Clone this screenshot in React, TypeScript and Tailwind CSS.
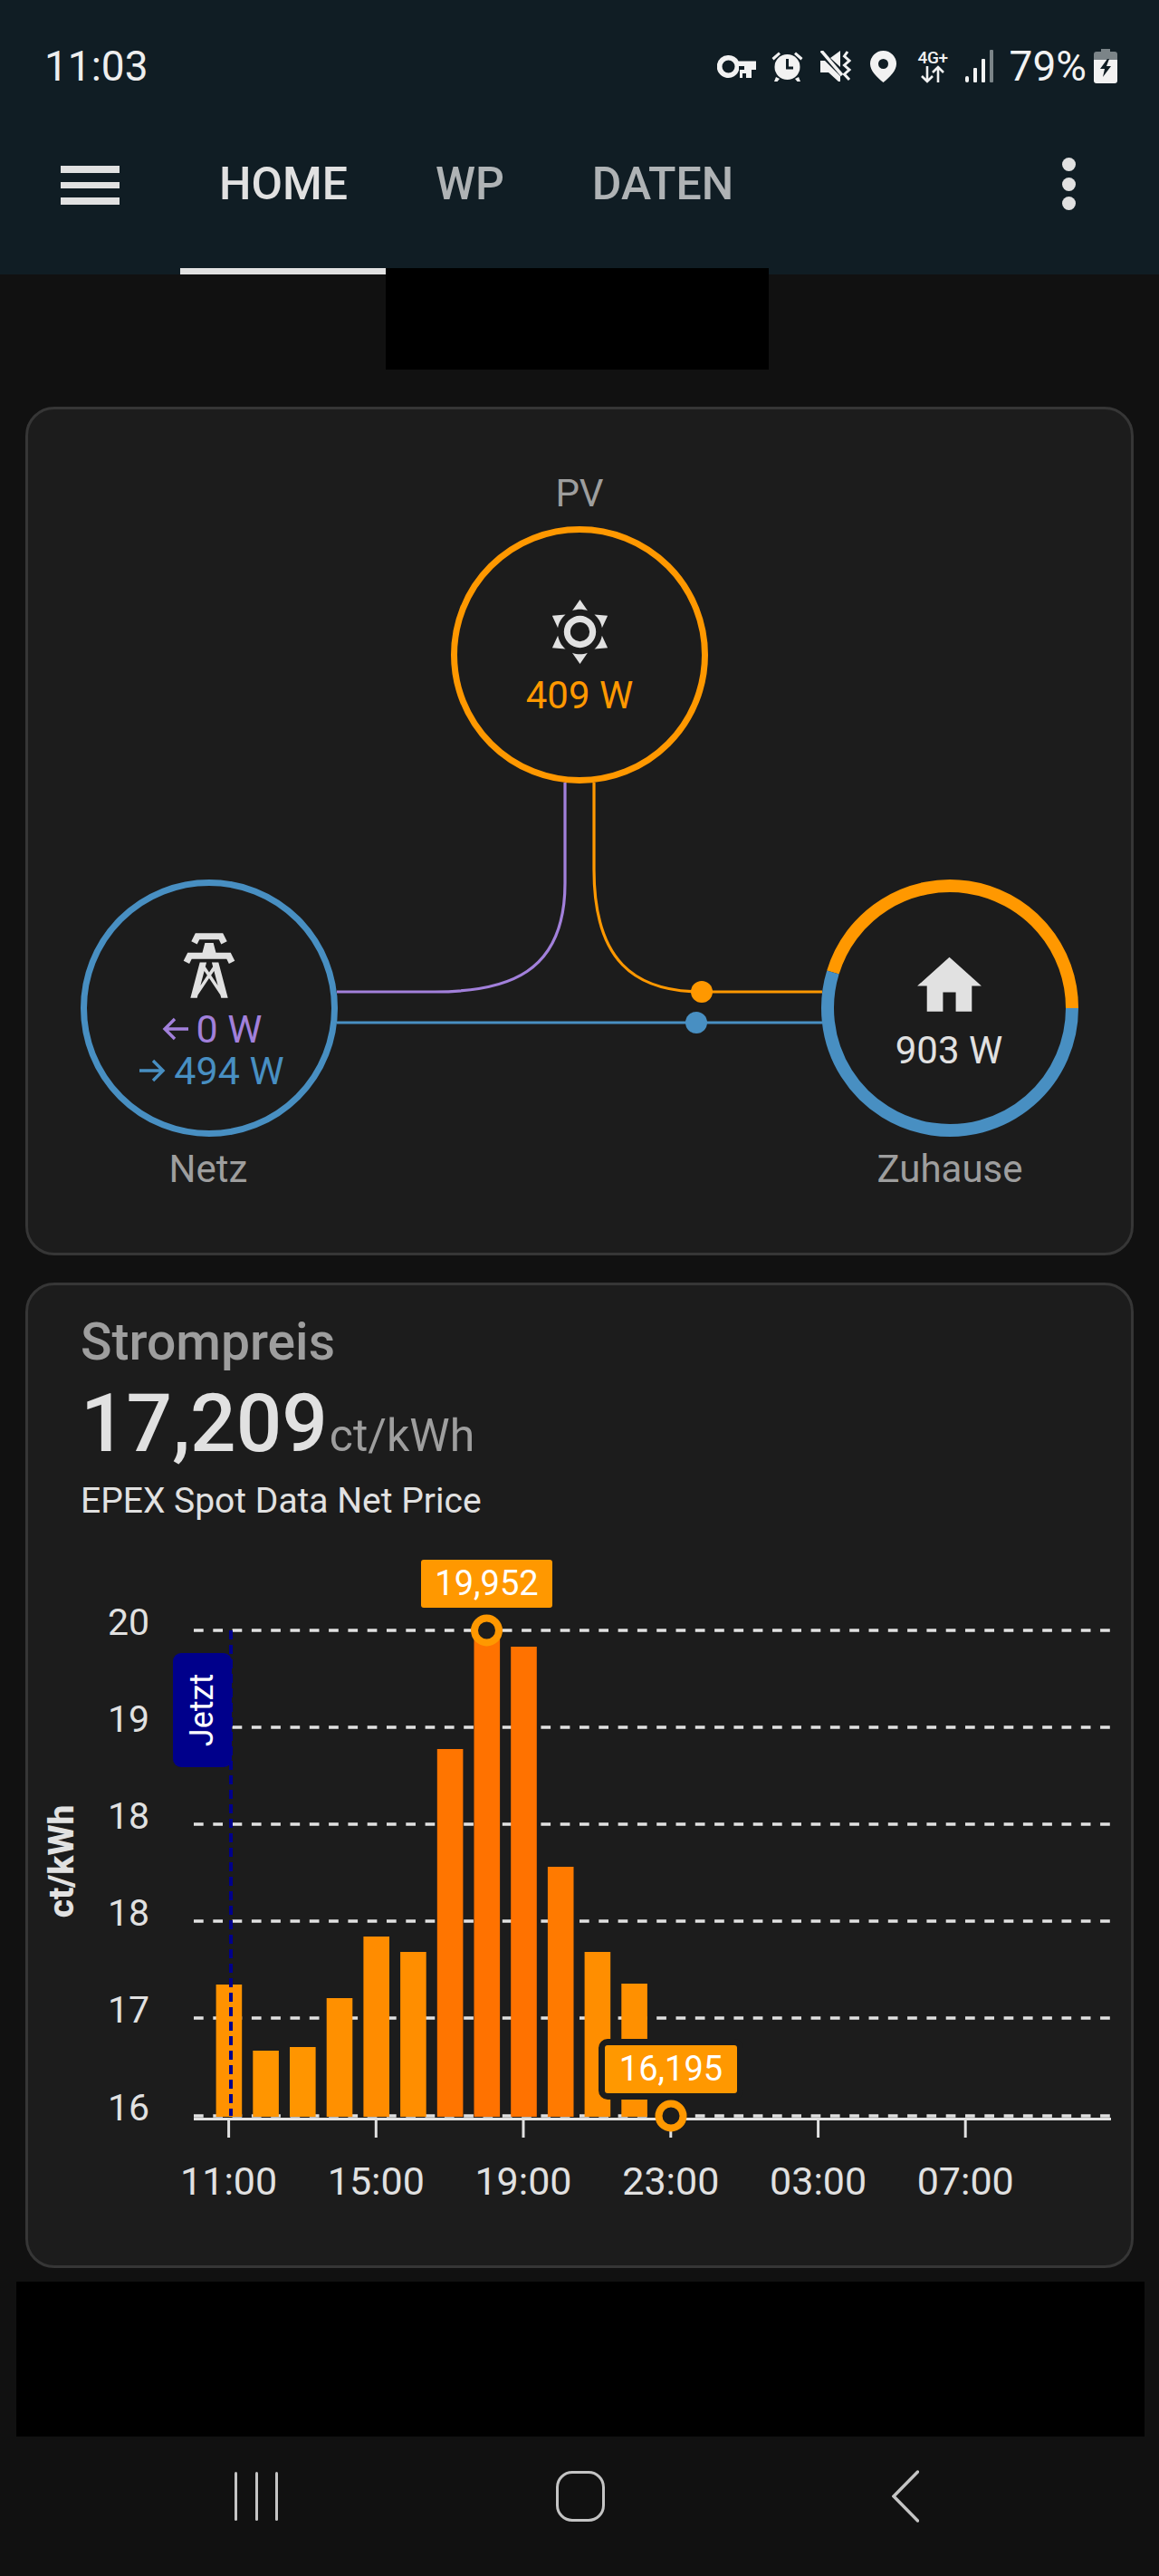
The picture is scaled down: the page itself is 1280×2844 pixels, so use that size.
import React from 'react';

const ORANGE = '#ff9800';
const BLUE = '#488fc2';
const PURPLE = '#a280db';
const TEXT = '#e1e1e1';

const bars = [
    { top: 2191, color: '#ff9200' },
    { top: 2264, color: '#ff9500' },
    { top: 2260, color: '#ff9500' },
    { top: 2206, color: '#ff9000' },
    { top: 2138, color: '#ff8c00' },
    { top: 2155, color: '#ff8e00' },
    { top: 1931, color: '#ff7500' },
    { top: 1800, color: '#ff7200' },
    { top: 1818, color: '#ff7200' },
    { top: 2061, color: '#ff7a00' },
    { top: 2155, color: '#ff8e00' },
    { top: 2190, color: '#ff9000' },
];

const gridLines = [
    { y: 1800, label: '20' },
    { y: 1907, label: '19' },
    { y: 2014, label: '18' },
    { y: 2121, label: '18' },
    { y: 2228, label: '17' },
    { y: 2336, label: '16' },
];

const ticks = [
    { x: 252.6, label: '11:00' },
    { x: 415.3, label: '15:00' },
    { x: 578, label: '19:00' },
    { x: 740.8, label: '23:00' },
    { x: 903.6, label: '03:00' },
    { x: 1066.2, label: '07:00' },
];

const KeyIcon = () => (
    <svg width="43" height="25" viewBox="0 0 43 25" fill="#f2f2f2">
        <path fillRule="evenodd" d="M12.5 0A12.5 12.5 0 0 1 23.6 6.5H43V16H38V25H32V20H28V25H25V16H24.2A12.5 12.5 0 1 1 12.5 0ZM12.5 5.5A7 7 0 1 0 12.5 19.5A7 7 0 1 0 12.5 5.5Z" />
        <path d="M24 12H30V16H24Z" fill="#101d24" />
    </svg>
);

const AlarmIcon = () => (
    <svg width="35" height="34" viewBox="0 0 35 34" fill="#f2f2f2">
        <circle cx="17.5" cy="18" r="14" />
        <path d="M0.5 8L8 1.5L10 3.8L2.5 10.5Z M34.5 8L27 1.5L25 3.8L32.5 10.5Z M5 29L9 31L6.5 34H3Z M30 29L26 31L28.5 34H32Z" />
        <path d="M17.5 9V19H24" fill="none" stroke="#101d24" strokeWidth="3" />
    </svg>
);

const MuteVibrateIcon = () => (
    <svg width="36" height="34" viewBox="0 0 36 34" fill="#f2f2f2">
        <path d="M0 11H5L22 28V34H20L9 24H0Z M11 8L22 0V18Z" />
        <path d="M1 0L24 27" stroke="#f2f2f2" strokeWidth="3.5" />
        <path d="M30 1L26.5 6L32 11L26.5 16L32 21L26.5 26L32 32" fill="none" stroke="#f2f2f2" strokeWidth="3" />
    </svg>
);

const PinIcon = () => (
    <svg width="29" height="35" viewBox="0 0 29 35" fill="#f2f2f2">
        <path fillRule="evenodd" d="M14.5 0A14.5 14.5 0 0 1 29 14.5C29 22 22 29 14.5 35C7 29 0 22 0 14.5A14.5 14.5 0 0 1 14.5 0ZM14.5 9A5.5 5.5 0 1 0 14.5 20A5.5 5.5 0 1 0 14.5 9Z" />
    </svg>
);

const NetworkIcon = () => (
    <div className="flex w-[39px] flex-col items-center">
        <span className="text-[19px] font-medium leading-[17px] tracking-[-0.3px] text-[#f2f2f2]">4G+</span>
        <svg width="28" height="20" viewBox="0 0 28 20" fill="none" stroke="#f2f2f2" strokeWidth="2.6">
            <path d="M8 1V18M2 12L8 18L14 12" />
            <path d="M20 19V2M14 8L20 2L26 8" />
        </svg>
    </div>
);

const SignalIcon = () => (
    <svg width="32" height="36" viewBox="0 0 32 36">
        <rect x="0" y="29" width="4" height="7" rx="2" fill="#f2f2f2" />
        <rect x="9" y="20" width="4" height="16" rx="1" fill="#f2f2f2" />
        <rect x="18" y="10" width="4" height="26" rx="1" fill="#f2f2f2" />
        <rect x="27" y="0" width="4" height="36" rx="1" fill="#7b8488" />
    </svg>
);

const BatteryIcon = () => (
    <svg width="26" height="38" viewBox="0 0 26 38">
        <path d="M8 0H18V3H23A3 3 0 0 1 26 6V12H0V6A3 3 0 0 1 3 3H8Z" fill="#7b8488" />
        <path d="M0 12H26V35A3 3 0 0 1 23 38H3A3 3 0 0 1 0 35Z" fill="#f2f2f2" />
        <path d="M15 11L7 22H12L10 31L19 19H14L17 11Z" fill="#101d24" />
    </svg>
);

const MdiIcon: React.FC<{ d: string; className?: string }> = ({ d, className }) => (
    <svg viewBox="0 0 24 24" fill={TEXT} className={className}>
        <path d={d} />
    </svg>
);

const SUN_PATH = 'M12,7A5,5 0 0,1 17,12A5,5 0 0,1 12,17A5,5 0 0,1 7,12A5,5 0 0,1 12,7M12,9A3,3 0 0,0 9,12A3,3 0 0,0 12,15A3,3 0 0,0 15,12A3,3 0 0,0 12,9M12,2L14.39,5.42C13.65,5.15 12.84,5 12,5C11.16,5 10.35,5.15 9.61,5.42L12,2M3.34,7L7.5,6.65C6.9,7.16 6.36,7.78 5.94,8.5C5.5,9.24 5.25,10 5.11,10.79L3.34,7M3.36,17L5.12,13.23C5.26,14 5.53,14.78 5.95,15.5C6.37,16.24 6.91,16.86 7.5,17.37L3.36,17M20.65,7L18.88,10.79C18.74,10 18.47,9.23 18.05,8.5C17.63,7.78 17.1,7.15 16.5,6.64L20.65,7M20.64,17L16.5,17.36C17.09,16.85 17.62,16.22 18.04,15.5C18.46,14.77 18.73,14 18.87,13.21L20.64,17M12,22L9.59,18.56C10.33,18.83 11.14,19 12,19C12.82,19 13.63,18.83 14.37,18.56L12,22Z';
const TOWER_PATH = 'M8.28,5.45L6.5,4.55L7.76,2H16.23L17.5,4.55L15.72,5.44L15,4H9L8.28,5.45M18.62,8H14.09L13.3,5H10.7L9.91,8H5.38L4.1,10.55L5.89,11.44L6.62,10H17.38L18.1,11.45L19.89,10.56L18.62,8M17.77,22H15.7L15.46,21.1L12,15.9L8.53,21.1L8.3,22H6.23L9.12,11H11.19L10.83,12.35L12,14.1L13.16,12.35L12.81,11H14.88L17.77,22M11.4,15L10.5,13.65L9.32,18.13L11.4,15M14.68,18.12L13.5,13.64L12.6,15L14.68,18.12Z';
const HOME_PATH = 'M10,20V14H14V20H19V12H22L12,3L2,12H5V20H10Z';

const ArrowLeft = ({ color }: { color: string }) => (
    <svg width="29" height="28" viewBox="0 0 29 28" fill="none" stroke={color} strokeWidth="3.4">
        <path d="M29 14H3M14 3L3 14L14 25" />
    </svg>
);

const ArrowRight = ({ color }: { color: string }) => (
    <svg width="29" height="28" viewBox="0 0 29 28" fill="none" stroke={color} strokeWidth="3.4">
        <path d="M0 14H26M15 3L26 14L15 25" />
    </svg>
);

const EnergyCard = () => (
    <section className="relative mx-[28px] mt-[146px] h-[937px] rounded-[32px] border-[3px] border-[#363636] bg-[#1c1c1c]">
        {/* page coordinates minus the card's inner corner */}
        <svg className="absolute inset-0" width="1216" height="931" viewBox="31 452 1216 931" fill="none">
            <path d="M624 864V975C624 1075 560 1095 480 1095H372" stroke={PURPLE} strokeWidth="3.2" />
            <path d="M656 864V960C656 1060 700 1095 775 1095H908" stroke={ORANGE} strokeWidth="3.2" />
            <path d="M372 1129H908" stroke={BLUE} strokeWidth="3.2" />
            <circle cx="775" cy="1095" r="12" fill={ORANGE} />
            <circle cx="769" cy="1129" r="12" fill={BLUE} />
            <path d="M1184 1113A135 135 0 0 0 919.9 1073.5" stroke={ORANGE} strokeWidth="14" />
            <path d="M919.9 1073.5A135 135 0 1 0 1184 1113" stroke={BLUE} strokeWidth="14" />
        </svg>

        {/* PV */}
        <div className="absolute left-[409px] top-[69px] w-[400px] text-center text-[42px] leading-[48px] text-[#9e9e9e]">PV</div>
        <div className="absolute left-[467px] top-[129px] flex h-[284px] w-[284px] flex-col items-center rounded-full border-[7px] border-[#ff9800]">
            <MdiIcon d={SUN_PATH} className="mt-[67px] h-[85px] w-[85px]" />
            <span className="mt-[4px] text-[42px] leading-[48px] text-[#ff9800]">409 W</span>
        </div>

        {/* Netz */}
        <div className="absolute left-[58px] top-[519px] flex h-[284px] w-[284px] flex-col items-center rounded-full border-[7px] border-[#488fc2]">
            <MdiIcon d={TOWER_PATH} className="mt-[45px] h-[86px] w-[86px]" />
            <div className="ml-[6px] mt-[4px] flex items-center gap-[9px] text-[43px] leading-[46px] text-[#a280db]">
                <ArrowLeft color={PURPLE} />
                <span>0 W</span>
            </div>
            <div className="ml-[6px] flex items-center gap-[9px] text-[43px] leading-[46px] text-[#488fc2]">
                <ArrowRight color={BLUE} />
                <span>494 W</span>
            </div>
        </div>
        <div className="absolute left-[-1px] top-[815px] w-[400px] text-center text-[42px] leading-[48px] text-[#9e9e9e]">Netz</div>

        {/* Zuhause */}
        <div className="absolute left-[875px] top-[519px] flex h-[284px] w-[284px] flex-col items-center">
            <MdiIcon d={HOME_PATH} className="mt-[75px] h-[85px] w-[85px]" />
            <span className="mt-[5px] text-[42px] leading-[48px] text-[#e1e1e1]">903 W</span>
        </div>
        <div className="absolute left-[818px] top-[815px] w-[400px] text-center text-[42px] leading-[48px] text-[#9e9e9e]">Zuhause</div>
    </section>
);

const PriceChart = () => (
    <svg className="block" width="1216" height="760" viewBox="31 1700 1216 760" fill="none">
        {gridLines.map(line => (
            <g key={line.y}>
                <path d={`M214 ${line.y}H1227`} stroke={TEXT} strokeWidth="3.4" strokeDasharray="10.7 10.6" />
                <text x="165" y={line.y + 5} textAnchor="end" fontSize="41" fill={TEXT}>{line.label}</text>
            </g>
        ))}
        {bars.map((bar, i) => (
            <rect key={i} x={238.6 + i * 40.7} y={bar.top} width="28.6" height={2337 - bar.top} fill={bar.color} />
        ))}
        <path d="M214 2339.5H1227" stroke={TEXT} strokeWidth="3" />
        {ticks.map(tick => (
            <g key={tick.x}>
                <path d={`M${tick.x} 2340V2360`} stroke={TEXT} strokeWidth="3" />
                <text x={tick.x} y="2423" textAnchor="middle" fontSize="43" fill={TEXT}>{tick.label}</text>
            </g>
        ))}
        <text x="0" y="0" transform="translate(81 2055) rotate(-90)" textAnchor="middle" fontSize="39" fontWeight="800" fill={TEXT}>ct/kWh</text>

        {/* Jetzt annotation */}
        <path d="M255 1800V2336" stroke="#00008b" strokeWidth="4" strokeDasharray="10 6" />
        <rect x="191" y="1825" width="65" height="126" rx="9" fill="#00008b" />
        <text x="0" y="0" transform="translate(235 1888) rotate(-90)" textAnchor="middle" fontSize="36" fill="#ffffff">Jetzt</text>

        {/* max and min points */}
        <circle cx="537.5" cy="1800" r="13.5" fill="#1c1c1c" stroke={ORANGE} strokeWidth="8" />
        <rect x="465" y="1722" width="145" height="53" rx="3" fill={ORANGE} />
        <text x="537.5" y="1761" textAnchor="middle" fontSize="38" fill="#ffffff">19,952</text>
        <circle cx="741" cy="2336" r="13.5" fill="#1c1c1c" stroke={ORANGE} strokeWidth="8" />
        <rect x="668" y="2258" width="146" height="53" rx="3" fill={ORANGE} stroke="#1c1c1c" strokeWidth="14" paintOrder="stroke" />
        <text x="741" y="2297" textAnchor="middle" fontSize="38" fill="#ffffff">16,195</text>
    </svg>
);

const PriceCard = () => (
    <section className="mx-[28px] mt-[30px] h-[1088px] rounded-[32px] border-[3px] border-[#363636] bg-[#1c1c1c]">
        <h2 className="ml-[58px] mt-[31px] text-[57px] font-medium leading-[64px] text-[#9e9e9e]">Strompreis</h2>
        <div className="ml-[58px] mt-[10px] flex h-[96px] items-baseline leading-[96px]">
            <span className="text-[89px] font-medium text-[#e1e1e1]">17,209</span>
            <span className="ml-[2px] text-[50px] text-[#9e9e9e]">ct/kWh</span>
        </div>
        <p className="ml-[58px] mt-[11px] text-[39px] leading-[52px] text-[#e1e1e1]">EPEX Spot Data Net Price</p>
        <div className="mt-[17px]">
            <PriceChart />
        </div>
    </section>
);

const NavBar = () => (
    <nav className="relative flex h-[132px] items-center">
        <div className="ml-[259px] flex gap-[19.5px]">
            <div className="h-[54px] w-[3px] rounded-full bg-[#c4c4c4]"></div>
            <div className="h-[54px] w-[3px] rounded-full bg-[#c4c4c4]"></div>
            <div className="h-[54px] w-[3px] rounded-full bg-[#c4c4c4]"></div>
        </div>
        <div className="ml-[307px] h-[56px] w-[54px] rounded-[18px] border-[3.5px] border-[#c4c4c4]"></div>
        <svg className="ml-[317px]" width="30" height="58" viewBox="0 0 30 58" fill="none" stroke="#c4c4c4" strokeWidth="3.4" strokeLinecap="round">
            <path d="M28.5 2L2 29L28.5 56" />
        </svg>
    </nav>
);

const App: React.FC = () => {
    return (
        <div className="relative flex h-[2844px] w-[1280px] flex-col overflow-hidden bg-[#111111] font-[family-name:Roboto,sans-serif]">
            <header className="h-[303px] shrink-0 bg-[#101d24]">
                <div className="flex h-[146px] items-center pl-[49px] pr-[46px]">
                    <span className="text-[46px] leading-[54px] text-[#eeeeee]">11:03</span>
                    <div className="ml-auto flex items-center">
                        <KeyIcon />
                        <div className="ml-[17px]"><AlarmIcon /></div>
                        <div className="ml-[19px]"><MuteVibrateIcon /></div>
                        <div className="ml-[19px]"><PinIcon /></div>
                        <div className="ml-[21px]"><NetworkIcon /></div>
                        <div className="ml-[16px]"><SignalIcon /></div>
                        <span className="ml-[17px] text-[46px] leading-[54px] text-[#f2f2f2]">79%</span>
                        <div className="ml-[8px]"><BatteryIcon /></div>
                    </div>
                </div>
                <div className="relative flex h-[157px] items-start">
                    <div className="ml-[67px] mt-[37px] flex w-[65px] flex-col gap-[10px]">
                        <div className="h-[7.5px] bg-[#e1e1e1]"></div>
                        <div className="h-[7.5px] bg-[#e1e1e1]"></div>
                        <div className="h-[7.5px] bg-[#e1e1e1]"></div>
                    </div>
                    <div className="ml-[110px] mt-[29px] text-[50px] font-medium leading-[56px] text-[#e1e1e1]">HOME</div>
                    <div className="ml-[97px] mt-[29px] text-[50px] font-medium leading-[56px] text-[#afb3b5]">WP</div>
                    <div className="ml-[97px] mt-[29px] text-[50px] font-medium leading-[56px] text-[#afb3b5]">DATEN</div>
                    <div className="absolute left-[1172.5px] top-[28px] flex flex-col gap-[6.5px]">
                        <div className="h-[15px] w-[15px] rounded-full bg-[#e1e1e1]"></div>
                        <div className="h-[15px] w-[15px] rounded-full bg-[#e1e1e1]"></div>
                        <div className="h-[15px] w-[15px] rounded-full bg-[#e1e1e1]"></div>
                    </div>
                    <div className="absolute left-[199px] top-[150px] h-[7px] w-[227px] bg-[#e1e1e1]"></div>
                </div>
            </header>

            {/* blacked out area over the header edge */}
            <div className="absolute left-[426px] top-[296px] h-[112px] w-[423px] bg-black"></div>

            <EnergyCard />
            <PriceCard />

            <div className="ml-[18px] mt-[15px] h-[171px] w-[1246px] shrink-0 bg-black"></div>
            <NavBar />
        </div>
    );
};

export default App;
